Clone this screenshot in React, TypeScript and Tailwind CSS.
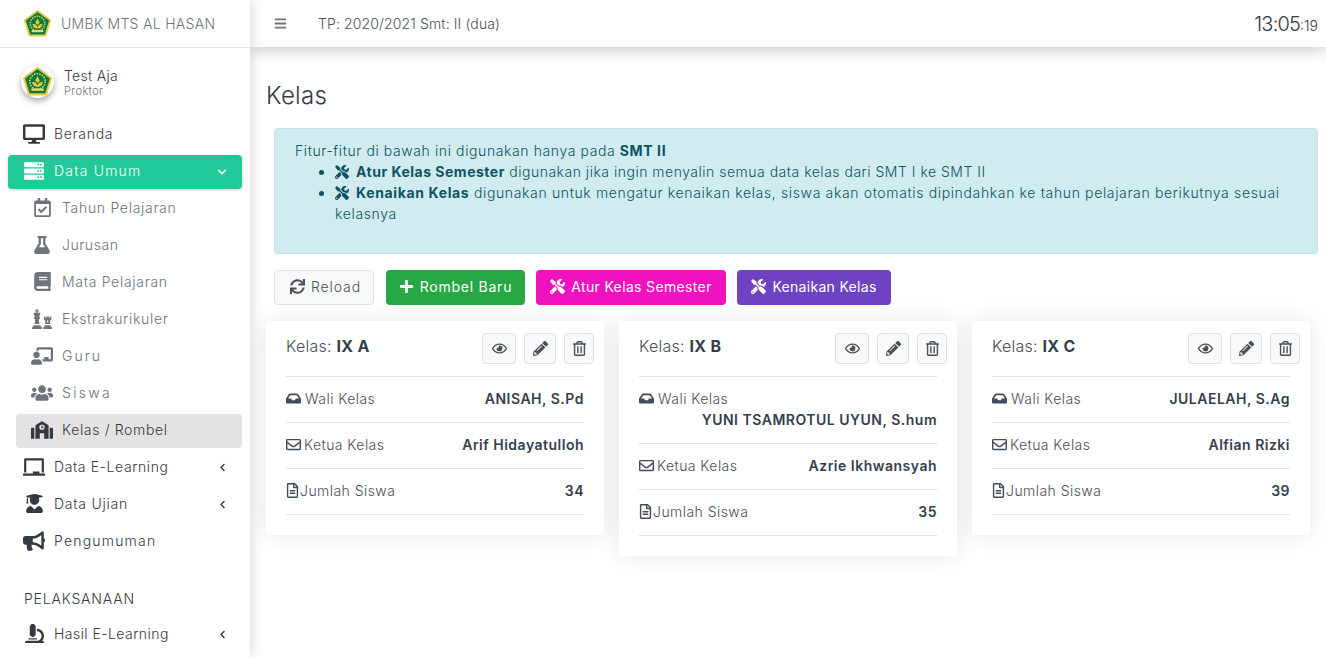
import React from "react";
import {
  FaBars, FaDesktop, FaServer, FaChevronDown, FaChevronLeft, FaRegCalendarCheck, FaFlask, FaBook, FaChess,
  FaChalkboardTeacher, FaUsers, FaSchool, FaChalkboard, FaUserGraduate, FaBullhorn, FaMicroscope, FaSync,
  FaPlus, FaTools, FaRegEye, FaPencilAlt, FaRegTrashAlt, FaInbox, FaRegEnvelope, FaRegFileAlt,
} from "react-icons/fa";

const font = { fontFamily: "Inter, 'Noto Sans', sans-serif" };

function Logo({ size }: { size: number }) {
  return (
    <svg width={size} height={size} viewBox="0 0 40 40">
      <polygon points="20,1 39,15 32,38 8,38 1,15" fill="#e8c94a" />
      <polygon points="20,4 36,16 30,35 10,35 4,16" fill="#0b7a3a" />
      <circle cx="20" cy="20" r="10" fill="none" stroke="#e8d76a" strokeWidth="2" strokeDasharray="2 1.5" />
      <path d="M13 21c3-1 5 0 7 4 2-4 4-5 7-4-1 4-3 6-7 6s-6-2-7-6z" fill="#e9c83c" />
      <path d="M17 19l3-6 3 6-3 3z" fill="#e9c83c" />
      <rect x="12" y="29" width="16" height="3" fill="#e8d76a" />
    </svg>
  );
}

function Item({ icon: Icon, label, arrow, size = 22, track }: { icon: any; label: string; arrow?: boolean; size?: number; track: string }) {
  return (
    <div className="mx-2 h-[37px] flex items-center pl-4 pr-[15px]">
      <span className="w-[22px] flex justify-center shrink-0 -ml-[1px] mr-[9px] text-[#343a40]"><Icon size={size} /></span>
      <span className={`text-[14px] font-light text-[#343a40] flex-1 ${track}`}>{label}</span>
      {arrow && <FaChevronLeft size={9} className="text-[#343a40] mt-[2px]" />}
    </div>
  );
}

function Sub({ icon: Icon, label, active, size = 19, track }: { icon: any; label: string; active?: boolean; size?: number; track: string }) {
  return (
    <div className="h-[37px] flex items-start pt-[3px] ml-4 mr-2">
      <div className={`w-full h-[34px] pb-[3px] rounded flex items-center pl-4 ${active ? "bg-[#e3e3e3]" : ""}`}>
        <span className={`w-[22px] -ml-[1px] mr-[9px] flex justify-center shrink-0 ${active ? "text-[#343a40]" : "text-[#6c757d]"}`}><Icon size={size} /></span>
        <span className={`text-[14px] font-light ${track} ${active ? "text-[#343a40]" : "text-[#6c757d]"}`}>{label}</span>
      </div>
    </div>
  );
}

function Sidebar() {
  return (
    <aside className="w-[250px] shrink-0 h-[658px] overflow-hidden bg-white shadow-[0_0_14px_rgba(0,0,0,0.18)] z-20 relative">
      <div className="h-[48px] border-b border-[#dee2e6] flex items-center pl-[23px] gap-[9px]">
        <Logo size={29} />
        <span className="text-[14px] tracking-[0.3px] font-light text-[#6c757d]">UMBK MTS AL HASAN</span>
      </div>
      <div className="h-[65px] flex items-center pl-[21px]">
        <div className="w-[33px] h-[33px] rounded-full bg-white shadow-[0_3px_6px_rgba(0,0,0,0.35)] flex items-center justify-center mt-[1px]"><Logo size={31} /></div>
        <div className="ml-[10px] mt-[3px]">
          <div className="text-[14px] leading-[17px] tracking-[0.3px] font-light text-[#343a40]">Test Aja</div>
          <div className="text-[11px] leading-[13px] tracking-[0.4px] font-light text-[#6c757d] mt-[1px]">Proktor</div>
        </div>
      </div>
      <div className="pt-[2px]">
        <Item icon={FaDesktop} label="Beranda" track="tracking-[0.7px]" />
        <div className="mx-2 h-[37px] flex items-start pt-[3px]">
          <div className="w-full h-[34px] pb-[3px] rounded bg-[#20c997] text-white flex items-center pl-4 pr-[15px] shadow-[0_1px_3px_rgba(0,0,0,0.2)]">
            <span className="w-[22px] flex justify-center -ml-[1px] mr-[9px]"><FaServer size={20} /></span>
            <span className="text-[14px] tracking-[1.2px] flex-1 font-light">Data Umum</span>
            <FaChevronDown size={10} className="mt-[3px]" />
          </div>
        </div>
        <Sub icon={FaRegCalendarCheck} label="Tahun Pelajaran" track="tracking-[0.7px]" />
        <Sub icon={FaFlask} label="Jurusan" size={18} track="tracking-[0.55px]" />
        <Sub icon={FaBook} label="Mata Pelajaran" track="tracking-[0.7px]" />
        <Sub icon={FaChess} label="Ekstrakurikuler" size={20} track="tracking-[0.7px]" />
        <Sub icon={FaChalkboardTeacher} label="Guru" size={22} track="tracking-[2px]" />
        <Sub icon={FaUsers} label="Siswa" size={22} track="tracking-[2.3px]" />
        <Sub icon={FaSchool} label="Kelas / Rombel" active size={22} track="tracking-[0.65px]" />
        <Item icon={FaChalkboard} label="Data E-Learning" arrow track="tracking-[0.6px]" />
        <Item icon={FaUserGraduate} label="Data Ujian" arrow size={19} track="tracking-[0.75px]" />
        <Item icon={FaBullhorn} label="Pengumuman" track="tracking-[1.2px]" />
        <div className="h-[56px] pl-[16px] ml-2 flex items-end">
          <span className="text-[14px] tracking-[0.8px] font-light text-[#343a40] leading-[20px] pb-[6px]">PELAKSANAAN</span>
        </div>
        <Item icon={FaMicroscope} label="Hasil E-Learning" arrow size={19} track="tracking-[0.45px]" />
      </div>
    </aside>
  );
}

function IconBtn({ icon: Icon, w }: { icon: any; w: string }) {
  return (
    <span className={`${w} h-[31px] rounded border border-[#dfe1e4] bg-[#f8f9fa] text-[#495057] flex items-center justify-center`}>
      <Icon size={15} />
    </span>
  );
}

function Row({ icon: Icon, label, value, stacked, iconCls }: { icon: any; label: string; value: string; stacked?: boolean; iconCls: string }) {
  return (
    <div className={`border-b border-[#dee2e6] text-[14px] text-[#495057] ${stacked ? "h-[67px] pt-[11px]" : "h-[46px] pb-[2px] flex items-center justify-between"}`}>
      <span className="flex items-center font-light tracking-[0.45px]"><Icon size={15} className={`text-[#3f4d5c] ${iconCls}`} />{label}</span>
      <span className={`font-semibold text-[#343f4d] tracking-[0.5px] ${stacked ? "block text-right leading-[21px]" : ""}`}>{value}</span>
    </div>
  );
}

function Card({ name, wali, ketua, jumlah, stacked }: { name: string; wali: string; ketua: string; jumlah: string; stacked?: boolean }) {
  return (
    <div className="w-[338px] bg-white rounded shadow-[0_0_22px_rgba(0,0,0,0.1)] pl-5 pr-5 pb-[20px] self-start">
      <div className="h-[56px] border-b border-[#dee2e6] flex items-start justify-between">
        <span className="mt-[14px] text-[16px] leading-[22px] font-light text-[#495057] tracking-[0.25px]">Kelas: <b className="font-bold text-[#343f4d]">{name}</b></span>
        <span className="flex gap-2 mt-[12px] -mr-[10px]">
          <IconBtn icon={FaRegEye} w="w-[34px]" />
          <IconBtn icon={FaPencilAlt} w="w-[32px]" />
          <IconBtn icon={FaRegTrashAlt} w="w-[30px]" />
        </span>
      </div>
      <Row icon={FaInbox} label="Wali Kelas" value={wali} stacked={stacked} iconCls="mr-[4px]" />
      <Row icon={FaRegEnvelope} label="Ketua Kelas" value={ketua} iconCls="mr-[3px]" />
      <Row icon={FaRegFileAlt} label="Jumlah Siswa" value={jumlah} iconCls="-ml-[1px] mr-0" />
    </div>
  );
}

function Btn({ icon: Icon, label, cls, track = "tracking-[0.3px]", gap = "mr-[6px]" }: { icon: any; label: string; cls: string; track?: string; gap?: string }) {
  return (
    <span className={`h-[35px] pb-[2px] rounded flex items-center text-[14px] ${track} ${cls}`}>
      <Icon size={15} className={gap} />{label}
    </span>
  );
}

export default function App() {
  return (
    <div className="flex w-[1326px] h-[658px] overflow-hidden bg-white" style={font}>
      <Sidebar />
      <div className="flex-1 min-w-0">
        <header className="h-[47px] bg-white shadow-[0_3px_14px_rgba(0,0,0,0.22)] flex items-center pl-[24px] pr-[8px] text-[#495057] relative z-10">
          <FaBars size={13} className="text-[#6c757d]" />
          <span className="ml-[31px] text-[14px] font-light tracking-[0.13px]">TP: 2020/2021 Smt: II (dua)</span>
          <span className="ml-auto font-light text-[#343a40]"><span className="text-[20px] tracking-[-0.8px]">13:05</span><span className="text-[14px]">:19</span></span>
        </header>
        <main className="pl-[16px] pr-[8px]">
          <h1 className="mt-[33px] h-[32px] text-[24px] leading-[32px] font-light text-[#343a40] tracking-[0.3px]">Kelas</h1>
          <div className="ml-[8px] mt-[16px] h-[126px] rounded border border-[#bee5eb] bg-[#d1ecf1] pl-5 pr-5 pt-[11px] text-[14px] leading-[21px] text-[#0c5460] font-light">
            <div className="tracking-[0.6px]">Fitur-fitur di bawah ini digunakan hanya pada <b className="font-bold">SMT II</b></div>
            <ul className="list-disc pl-10">
              <li className="tracking-[0.5px]"><FaTools size={14} className="inline -mt-[3px] mr-[7px]" /><b className="font-bold">Atur Kelas Semester</b> digunakan jika ingin menyalin semua data kelas dari SMT I ke SMT II</li>
              <li className="tracking-[0.64px]"><FaTools size={14} className="inline -mt-[3px] mr-[7px]" /><b className="font-bold">Kenaikan Kelas</b> digunakan untuk mengatur kenaikan kelas, siswa akan otomatis dipindahkan ke tahun pelajaran berikutnya sesuai kelasnya</li>
            </ul>
          </div>
          <div className="ml-[8px] mt-[16px] flex gap-[11px]">
            <Btn icon={FaSync} label="Reload" cls="w-[100px] mr-[1px] pl-[3px] justify-center border border-[#dfe1e4] bg-[#f8f9fa] text-[#495057] font-light" track="tracking-[0.9px]" />
            <Btn icon={FaPlus} label="Rombel Baru" cls="w-[139px] justify-center bg-[#28a745] text-white" track="tracking-[0.75px]" />
            <Btn icon={FaTools} label="Atur Kelas Semester" cls="w-[190px] justify-center bg-[#f012be] text-white" track="tracking-[0.35px]" />
            <Btn icon={FaTools} label="Kenaikan Kelas" cls="w-[154px] justify-center bg-[#6f42c1] text-white" />
          </div>
          <div className="mt-[16px] flex gap-[15px]">
            <Card name="IX A" wali="ANISAH, S.Pd" ketua="Arif Hidayatulloh" jumlah="34" />
            <Card name="IX B" wali="YUNI TSAMROTUL UYUN, S.hum" ketua="Azrie Ikhwansyah" jumlah="35" stacked />
            <Card name="IX C" wali="JULAELAH, S.Ag" ketua="Alfian Rizki" jumlah="39" />
          </div>
        </main>
      </div>
    </div>
  );
}
